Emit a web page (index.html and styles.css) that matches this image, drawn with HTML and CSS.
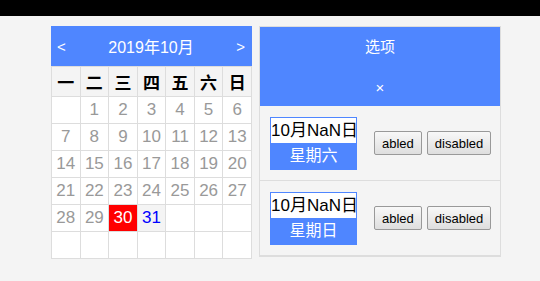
FILE: index.html
```html
<!DOCTYPE html>
<html>
<head>
  <meta charset="utf-8">
  <title>日历</title>
  <link rel="stylesheet" href="styles.css">
</head>
<body>
  <div class="topbar"></div>
  <div class="page">
    <div class="calendar">
      <div class="cal-head">
        <span class="prev">&lt;</span>
        <span class="cal-title">2019年10月</span>
        <span class="next">&gt;</span>
      </div>
      <table class="cal-table">
        <thead>
          <tr><th>一</th><th>二</th><th>三</th><th>四</th><th>五</th><th>六</th><th>日</th></tr>
        </thead>
        <tbody>
          <tr><td></td><td>1</td><td>2</td><td>3</td><td>4</td><td>5</td><td>6</td></tr>
          <tr><td>7</td><td>8</td><td>9</td><td>10</td><td>11</td><td>12</td><td>13</td></tr>
          <tr><td>14</td><td>15</td><td>16</td><td>17</td><td>18</td><td>19</td><td>20</td></tr>
          <tr><td>21</td><td>22</td><td>23</td><td>24</td><td>25</td><td>26</td><td>27</td></tr>
          <tr><td>28</td><td>29</td><td class="selected">30</td><td class="today">31</td><td></td><td></td><td></td></tr>
          <tr><td></td><td></td><td></td><td></td><td></td><td></td><td></td></tr>
        </tbody>
      </table>
    </div>

    <div class="panel">
      <div class="panel-head">
        <div class="panel-title">选项</div>
        <div class="panel-close">×</div>
      </div>
      <div class="option">
        <div class="date-box">
          <div class="date-day">10月NaN日</div>
          <div class="date-week">星期六</div>
        </div>
        <button class="btn">abled</button>
        <button class="btn">disabled</button>
      </div>
      <div class="option">
        <div class="date-box">
          <div class="date-day">10月NaN日</div>
          <div class="date-week">星期日</div>
        </div>
        <button class="btn">abled</button>
        <button class="btn">disabled</button>
      </div>
    </div>
  </div>
</body>
</html>
```

FILE: styles.css
```css
body {
  margin: 0;
  background-color: #f4f4f4;
  font-family: "Liberation Sans", "Noto Sans CJK SC", sans-serif;
}

.topbar {
  height: 16px;
  background-color: #000;
}

.page {
  display: flex;
  align-items: flex-start;
  gap: 7px;
  padding: 10px 0 0 51px;
}

.calendar {
  width: 201px;
  background-color: #fff;
}

.cal-head {
  display: flex;
  align-items: center;
  justify-content: space-between;
  height: 40px;
  padding: 0 7px 0 6px;
  background-color: #4f86ff;
  color: #fff;
  font-size: 15px;
}

.cal-title {
  font-size: 16px;
}

.cal-table {
  width: 201px;
  border-collapse: collapse;
  table-layout: fixed;
}

.cal-table th,
.cal-table td {
  border: 1px solid #ddd;
  padding: 0;
  text-align: center;
  font-size: 17px;
}

.cal-table th {
  height: 29px;
  background-color: #f4f4f4;
  color: #000;
  font-weight: bold;
}

.cal-table td {
  height: 26px;
  color: #999;
}

.cal-table td.selected {
  background-color: #f00;
  color: #fff;
}

.cal-table td.today {
  background-color: #f4f4f4;
  color: #00f;
}

.panel {
  width: 240px;
  border: 1px solid #ddd;
  border-bottom-width: 2px;
  background-color: #f4f4f4;
}

.panel-head {
  background-color: #4f86ff;
  color: #fff;
  text-align: center;
  height: 79px;
}

.panel-title {
  height: 40px;
  line-height: 40px;
  font-size: 15px;
}

.panel-close {
  height: 39px;
  line-height: 42px;
  font-size: 15px;
}

.option {
  display: flex;
  align-items: center;
  height: 74px;
  padding-left: 10px;
  border-bottom: 1px solid #ddd;
}

.option:last-child {
  border-bottom: none;
}

.date-box {
  width: 85px;
  border: 1px solid #4f86ff;
  margin-right: 17px;
  text-align: center;
}

.date-day {
  height: 25px;
  line-height: 25px;
  background-color: #fff;
  color: #000;
  font-size: 17px;
  white-space: nowrap;
}

.date-week {
  height: 26px;
  line-height: 26px;
  background-color: #4f86ff;
  color: #fff;
  font-size: 16px;
}

.btn {
  height: 24px;
  margin-right: 5px;
  padding: 0 7px;
  border: 1px solid #999;
  border-radius: 2px;
  background: linear-gradient(#f8f8f8, #dedede);
  color: #000;
  font-family: "Liberation Sans", sans-serif;
  font-size: 13px;
}
```
